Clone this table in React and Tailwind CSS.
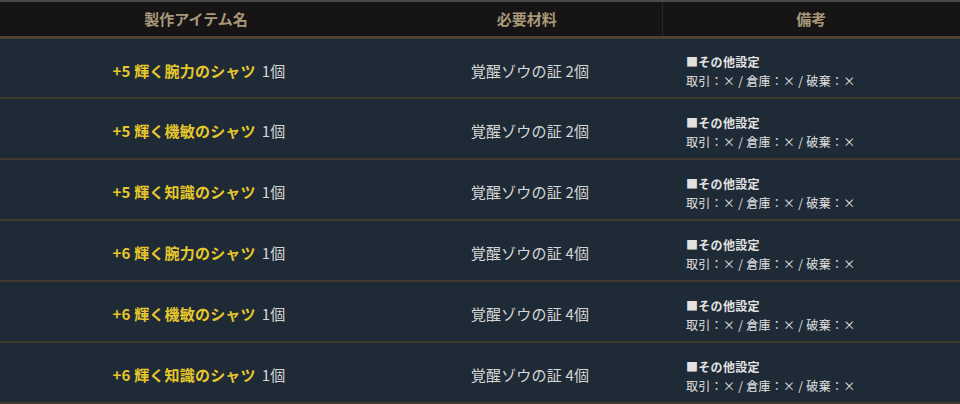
import React from 'react';

const rows = [
  { name: '+5 輝く腕力のシャツ', count: 2 },
  { name: '+5 輝く機敏のシャツ', count: 2 },
  { name: '+5 輝く知識のシャツ', count: 2 },
  { name: '+6 輝く腕力のシャツ', count: 4 },
  { name: '+6 輝く機敏のシャツ', count: 4 },
  { name: '+6 輝く知識のシャツ', count: 4 },
];

const font = { fontFamily: '"Noto Sans CJK JP", "Noto Sans", sans-serif' };

export default function App() {
  return (
    <div className="w-[960px] h-[404px] bg-[#1f2a37] overflow-hidden" style={font}>
      <table className="w-full border-collapse border-t-2 border-[#4a4848]">
        <thead>
          <tr className="h-[36px] bg-[#161415] text-[#a8987a] text-[15px] font-bold border-b-[3px] border-[#4f4233]">
            <th className="w-[392px] font-bold">製作アイテム名</th>
            <th className="w-[270px] font-bold border-r border-[#1e2a38]">必要材料</th>
            <th className="font-bold">備考</th>
          </tr>
        </thead>
        <tbody>
          {rows.map((row, i) => (
            <tr key={i} className="h-[61px] border-b-2 border-[#43392c]">
              <td className="text-center text-[15px] pt-[6px] pl-[6px] tracking-[0.2px]">
                <span className="font-bold text-[#e6c72b]">{row.name}</span>
                <span className="text-[#d6d6d6] ml-[6px]">1個</span>
              </td>
              <td className="text-center text-[15px] pt-[6px] pl-[6px] text-[#d6d6d6] tracking-[0.2px]">覚醒ゾウの証 {row.count}個</td>
              <td className="pl-[24px] pt-[6px] text-[12px] text-[#e2e2e2] leading-[19px] tracking-[0.3px]">
                <div className="font-bold">■その他設定</div>
                <div>取引：× / 倉庫：× / 破棄：×</div>
              </td>
            </tr>
          ))}
        </tbody>
      </table>
    </div>
  );
}
